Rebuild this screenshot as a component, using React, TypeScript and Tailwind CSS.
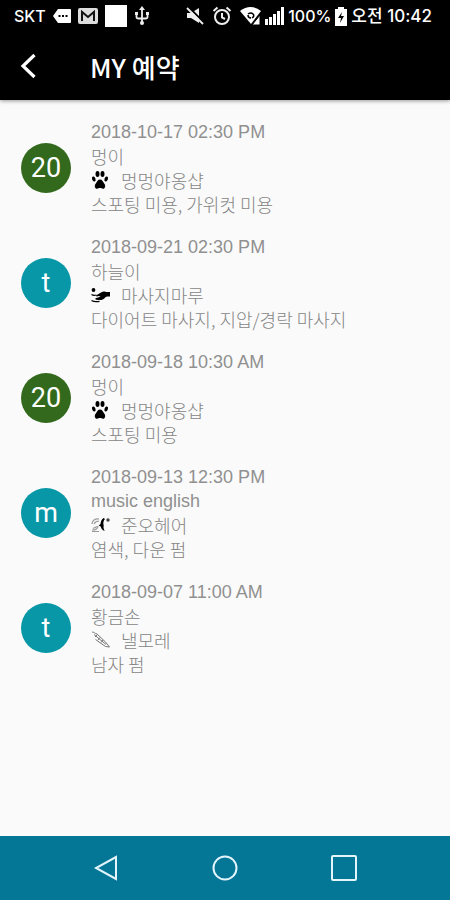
import type { ReactNode } from 'react'

function PawIcon() {
  return (
    <svg viewBox="0 0 20 20" className="h-5 w-5" aria-hidden>
      <ellipse cx="6.500" cy="4" rx="2" ry="3" />
      <ellipse cx="11.500" cy="4" rx="2" ry="3" />
      <ellipse cx="2.800" cy="9" rx="1.700" ry="2.600" transform="rotate(-20 2.800 9)" />
      <ellipse cx="15.200" cy="9" rx="1.700" ry="2.600" transform="rotate(20 15.200 9)" />
      <path d="M9 9.500c2.200 0 2.800 2.200 4.200 3.900 1.700 1.900 1.200 5.300-1.300 5.300-1 0-1.700-.6-2.900-.6s-1.900.6-2.900.6c-2.500 0-3-3.400-1.300-5.300C6.200 11.700 6.800 9.500 9 9.500z" />
    </svg>
  )
}

function MassageIcon() {
  return (
    <svg viewBox="0 0 20 20" className="h-5 w-5" aria-hidden>
      <circle cx="2.500" cy="5" r="1.900" />
      <path d="M5 10.500L10 7.500c2-1.200 3.500-1 5-.5h4v4.500h-2.500c-1.800.2-2.500 1.200-3.500 2.200-1.500 1.200-3 1.500-5 1.300l-3-.2c-1-.3-.8-1.400.2-1.700l4.300-1.300-1.500-.9-2.500.6z" />
      <path d="M.5 9.500c1.500 1 3 1.200 5 .5M.5 15.500c2 1.200 5 1.500 8 .8" fill="none" stroke="currentColor" strokeWidth="1.200" />
    </svg>
  )
}

function HairIcon() {
  return (
    <svg viewBox="0 0 20 20" className="h-5 w-5" aria-hidden>
      <path
        d="M1 9c0-3.500 3-5.500 7-5M3 9c1-2 3-3 5-3M1 15c3 0 6-1 6-4M2 13.500l4-2M1 16.500h7"
        fill="none"
        stroke="#999"
        strokeWidth="1.200"
      />
      <path d="M12.500 3c-2 1.500-3 4-3 6l-1.800 1.500 2 1c.5 2 1.500 3.500 4 4.500-1-2-1.500-3.500-1-5.500-.8-2-.3-5 1.300-6.500z" />
      <circle cx="17" cy="5" r="1.700" fill="#444" />
    </svg>
  )
}

function CombIcon() {
  return (
    <svg viewBox="0 0 20 20" className="h-5 w-5" fill="none" stroke="#777" strokeWidth="1" aria-hidden>
      <path d="M1 2c2 0 3 1.500 5 2L14 11.500l4.500 5.500-4-.5L4.500 9.500M6 5l-2 2M9 7.500l-2 2.500M12 10l-2 2.500M3 4.500l12 10" />
    </svg>
  )
}

type Reservation = {
  date: string
  name: string
  latin?: boolean
  shop: string
  services: string
  avatar: string
  avatarColor: string
  icon: ReactNode
}

const reservations: Reservation[] = [
  {
    date: '2018-10-17 02:30 PM',
    name: '멍이',
    shop: '멍멍야옹샵',
    services: '스포팅 미용, 가위컷 미용',
    avatar: '20',
    avatarColor: 'bg-[#32691d]',
    icon: <PawIcon />,
  },
  {
    date: '2018-09-21 02:30 PM',
    name: '하늘이',
    shop: '마사지마루',
    services: '다이어트 마사지, 지압/경락 마사지',
    avatar: 't',
    avatarColor: 'bg-[#0797a7]',
    icon: <MassageIcon />,
  },
  {
    date: '2018-09-18 10:30 AM',
    name: '멍이',
    shop: '멍멍야옹샵',
    services: '스포팅 미용',
    avatar: '20',
    avatarColor: 'bg-[#32691d]',
    icon: <PawIcon />,
  },
  {
    date: '2018-09-13 12:30 PM',
    name: 'music english',
    latin: true,
    shop: '준오헤어',
    services: '염색, 다운 펌',
    avatar: 'm',
    avatarColor: 'bg-[#0797a7]',
    icon: <HairIcon />,
  },
  {
    date: '2018-09-07 11:00 AM',
    name: '황금손',
    shop: '낼모레',
    services: '남자 펌',
    avatar: 't',
    avatarColor: 'bg-[#0797a7]',
    icon: <CombIcon />,
  },
]

function StatusBar() {
  return (
    <div className="flex h-8 items-center justify-between pr-[18px] pl-3.5 font-['Inter','Noto_Sans_CJK_KR',sans-serif] text-base font-medium whitespace-nowrap">
      <div className="flex items-center gap-[7px]">
        <span>SKT</span>
        <svg viewBox="0 0 18 14" className="h-3.5 w-[18px]" aria-hidden>
          <path d="M5 0h12q1 0 1 1v12q0 1-1 1H5L0 7z" fill="#fff" />
          <path d="M5.500 6h2v2h-2zM9 6h2v2H9zM12.500 6h2v2h-2z" fill="#000" />
        </svg>
        <svg viewBox="0 0 20 16" className="h-4 w-5" aria-hidden>
          <rect width="20" height="16" rx="2" fill="#ddd" />
          <path d="M4 13V4l6 5 6-5v9" fill="none" stroke="#111" strokeWidth="2" />
        </svg>
        <span className="h-[22px] w-[22px] bg-white" />
        <svg viewBox="0 0 16 20" className="h-5 w-4" fill="none" stroke="#eee" strokeWidth="1.800" aria-hidden>
          <path d="M8 3v14M2.500 8v3q0 1.500 2 1.500h7q2 0 2-1.500V8" />
          <path d="M8 0l3 4H5zM1 6h3v3H1zM12 6h3v3h-3z" fill="#eee" stroke="none" />
          <circle cx="8" cy="17" r="2" fill="#eee" stroke="none" />
        </svg>
      </div>
      <div className="flex items-center gap-1">
        <svg viewBox="0 0 18 18" className="mr-1 h-[18px] w-[18px]" aria-hidden>
          <path d="M1 6h4l8-5v15l-8-5H1z" fill="#eee" />
          <path d="M2.500 0l16 16" stroke="#000" strokeWidth="2" />
          <path d="M1 1l16 16" stroke="#eee" strokeWidth="1.800" />
        </svg>
        <svg viewBox="0 0 20 20" className="mr-1 h-5 w-5" fill="none" stroke="#eee" strokeWidth="2" aria-hidden>
          <circle cx="10" cy="11" r="7" />
          <path d="M10 7v4.500l3 1.500M1.500 5l4-3.500M18.500 5l-4-3.500" />
        </svg>
        <svg viewBox="0 0 21 18" className="h-[18px] w-[21px]" aria-hidden>
          <path d="M0 4q10.500-8 21 0L11 17z" fill="#fff" />
          <path d="M8 7q3-2 5 0t-1 4M8 8q0 3 3 3" fill="none" stroke="#000" strokeWidth="1.500" />
          <path d="M20 8v10h-8z" fill="#fff" stroke="#000" />
        </svg>
        <svg viewBox="0 0 19 18" className="h-[18px] w-[19px]" fill="#fff" aria-hidden>
          <path d="M0 12h3v6H0zM4 10h3v8H4zM8 7h3v11H8zM12 4h3v14h-3zM16 0h3v18h-3z" />
        </svg>
        <span>100%</span>
        <svg viewBox="0 0 12 19" className="h-[19px] w-3" aria-hidden>
          <path d="M3 2V0h6v2h3v17H0V2z" fill="#fff" />
          <path d="M7 5l-4 6h3l-1 5 4-7H6z" fill="#000" />
        </svg>
        <span className="text-[17px] leading-6">오전 10:42</span>
      </div>
    </div>
  )
}

function ReservationRow({ item }: { item: Reservation }) {
  return (
    <li className="flex items-center gap-5">
      <div
        className={`flex h-[50px] w-[50px] shrink-0 items-center justify-center rounded-full font-[Roboto,sans-serif] text-[27px] text-white ${item.avatarColor}`}
      >
        {item.avatar}
      </div>
      <div className="min-w-0 font-['Noto_Sans_CJK_KR',sans-serif] text-lg leading-6 font-light text-[#858585]">
        <p className="font-['Liberation_Sans',sans-serif] text-[#909090]">{item.date}</p>
        <p className={item.latin ? "font-['Liberation_Sans',sans-serif] text-[#909090]" : ''}>{item.name}</p>
        <p className="flex items-center gap-2.5">
          <span className="text-black">{item.icon}</span>
          {item.shop}
        </p>
        <p>{item.services}</p>
      </div>
    </li>
  )
}

export default function App() {
  return (
    <div className="flex min-h-screen flex-col bg-[#fafafa]">
      <header className="bg-black text-white shadow-[0_1px_4px_rgba(0,0,0,0.4)]">
        <StatusBar />
        <div className="flex h-[68px] items-center gap-[54px] pl-5">
          <button type="button" aria-label="뒤로" className="h-7 w-4">
            <svg viewBox="0 0 16 28" className="h-7 w-4" fill="none" stroke="#fff" strokeWidth="3.200" aria-hidden>
              <path d="M14.500 3L3 14l11.500 11" />
            </svg>
          </button>
          <h1 className="font-['Noto_Sans_CJK_KR',sans-serif] text-[26px] font-medium">MY 예약</h1>
        </div>
      </header>

      <main className="flex-1 px-[21px] py-5">
        <ul className="flex flex-col gap-[19px]">
          {reservations.map((item) => (
            <ReservationRow key={item.date} item={item} />
          ))}
        </ul>
      </main>

      <nav className="flex h-16 items-center justify-center gap-[93px] bg-[#047797]">
        <button type="button" aria-label="이전">
          <svg viewBox="0 0 26 28" className="h-7 w-[26px]" fill="none" stroke="#e3f4fb" strokeWidth="2" aria-hidden>
            <path d="M23 3v22L3 14z" />
          </svg>
        </button>
        <button type="button" aria-label="홈">
          <svg viewBox="0 0 26 28" className="h-7 w-[26px]" fill="none" stroke="#e3f4fb" strokeWidth="2" aria-hidden>
            <circle cx="13" cy="14" r="11.500" />
          </svg>
        </button>
        <button type="button" aria-label="최근 앱">
          <svg viewBox="0 0 26 28" className="h-7 w-[26px]" fill="none" stroke="#e3f4fb" strokeWidth="2" aria-hidden>
            <rect x="1" y="2" width="24" height="24" rx="1" />
          </svg>
        </button>
      </nav>
    </div>
  )
}
